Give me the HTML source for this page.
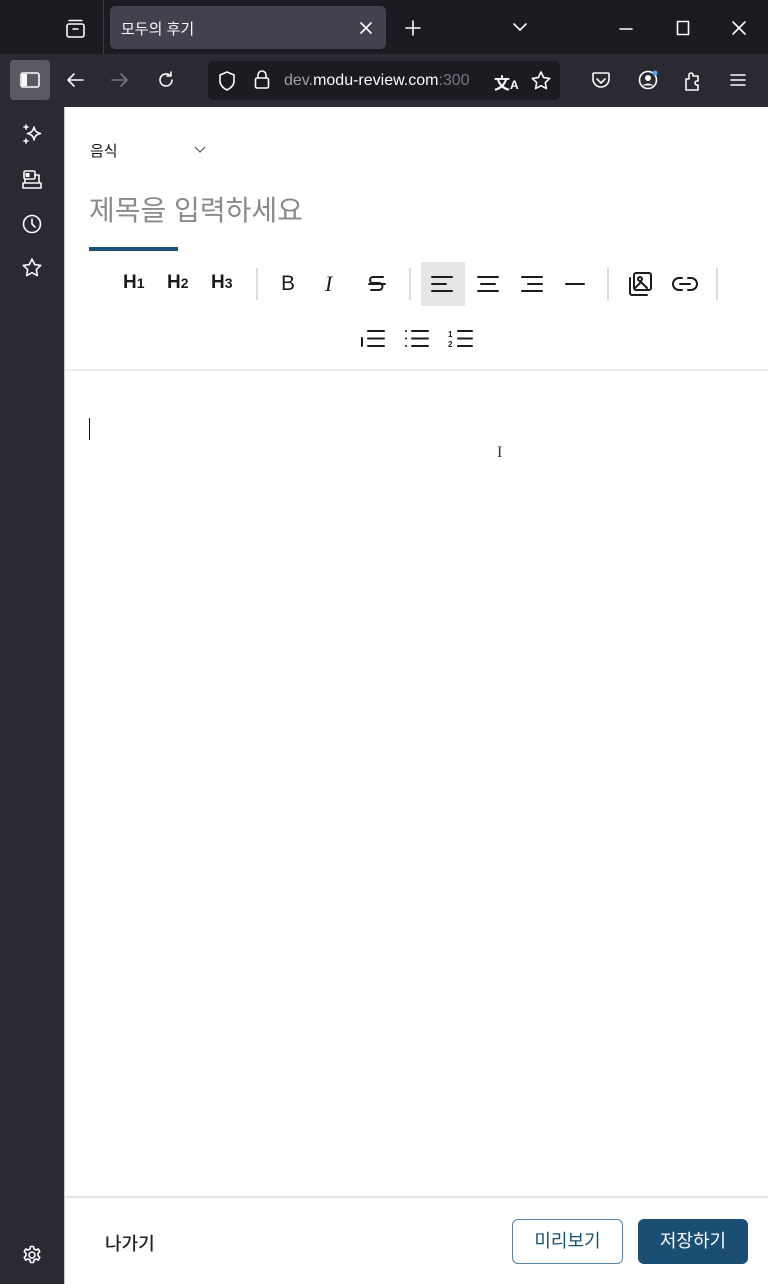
<!DOCTYPE html>
<html><head><meta charset="utf-8"><style>
*{margin:0;padding:0;box-sizing:border-box}
body{width:768px;height:1284px;overflow:hidden;position:relative;background:#fff;font-family:"Liberation Sans","Noto Sans CJK KR",sans-serif}
.a{position:absolute}
svg{position:absolute;overflow:visible}
.w{stroke:#fbfbfe;fill:none;stroke-width:1.6;stroke-linecap:round;stroke-linejoin:round}
.k{stroke:#1c1c1c;fill:none;stroke-width:2;stroke-linecap:round;stroke-linejoin:round}
.tb{font-weight:bold;font-size:19px;color:#1c1c1c;top:272px}
.sep{position:absolute;width:2px;height:32px;background:#ddd;top:268px}
</style></head><body>
<div class="a" style="left:0;top:0;width:768px;height:54px;background:#1c1b22"></div>
<div class="a" style="left:103px;top:0;width:1px;height:54px;background:#3a3944"></div>
<svg style="left:66px;top:19px" width="20" height="20"><rect x="1" y="5" width="17" height="13" rx="2" class="w"/><path d="M3 1.5h13M7 10h5" class="w"/></svg>
<div class="a" style="left:110px;top:6px;width:276px;height:43px;background:#42414d;border-radius:5px"></div>
<div class="a" style="left:121px;top:18px;font-size:15px;color:#fbfbfe">모두의 후기</div>
<svg style="left:360px;top:22px" width="12" height="12"><path d="M1 1l10 10M11 1L1 11" class="w"/></svg>
<svg style="left:405px;top:20px" width="16" height="16"><path d="M8 1v14M1 8h14" class="w"/></svg>
<svg style="left:513px;top:23px" width="14" height="8"><path d="M1 1l6 6 6-6" class="w"/></svg>
<svg style="left:620px;top:28px" width="12" height="2"><path d="M0 1h12" class="w" stroke-width="1"/></svg>
<svg style="left:677px;top:21px" width="12" height="14"><rect x="0.5" y="0.5" width="11" height="13" class="w" stroke-width="1"/></svg>
<svg style="left:732px;top:21px" width="14" height="14"><path d="M1 1l12 12M13 1L1 13" class="w" stroke-width="1.2"/></svg>

<div class="a" style="left:0;top:54px;width:768px;height:53px;background:#2b2a33"></div>
<div class="a" style="left:10px;top:60px;width:40px;height:40px;background:#5b5b66;border-radius:4px"></div>
<svg style="left:20px;top:72px" width="20" height="16"><rect x="1" y="1" width="18" height="14" rx="2" class="w"/><rect x="2" y="2" width="5" height="12" fill="#fbfbfe"/></svg>
<svg style="left:66px;top:72px" width="18" height="16"><path d="M17 8H2M8 2L2 8l6 6" class="w"/></svg>
<svg style="left:111px;top:72px" width="18" height="16"><path d="M1 8h15M10 2l6 6-6 6" class="w" style="stroke:#77767f"/></svg>
<svg style="left:157px;top:71px" width="18" height="18"><path d="M15 9a6 6 0 1 1-2-4.5M14 1v4h-4" class="w"/></svg>
<div class="a" style="left:208px;top:61px;width:352px;height:39px;background:#1c1b22;border-radius:5px"></div>
<svg style="left:218px;top:71px" width="18" height="20"><path d="M9 1l7 3v6c0 4-3 7-7 9-4-2-7-5-7-9V4z" class="w"/></svg>
<svg style="left:254px;top:70px" width="16" height="20"><rect x="1.5" y="8" width="13" height="10" rx="1.5" class="w"/><path d="M4 8V5a4 4 0 0 1 8 0v3" class="w"/></svg>
<div class="a" style="left:284px;top:72px;font-size:16px;color:#fbfbfe;white-space:nowrap;width:198px;overflow:hidden"><span style="color:#9e9ea6">dev.</span>modu-review.com<span style="color:#77767f">:300</span></div>
<div class="a" style="left:494px;top:70px;font-size:16px;color:#fbfbfe;font-weight:bold">文<span style="font-size:12px">A</span></div>
<svg style="left:531px;top:71px" width="20" height="19"><path d="M10 1l2.7 5.6 6 .8-4.4 4.2 1.1 6L10 14.7 4.6 17.6l1.1-6L1.3 7.4l6-.8z" class="w"/></svg>
<svg style="left:592px;top:72px" width="18" height="17"><path d="M2 1h14a1 1 0 0 1 1 1v5a8 8 0 0 1-16 0V2a1 1 0 0 1 1-1zM5 7l4 4 4-4" class="w"/></svg>
<svg style="left:638px;top:70px" width="20" height="20"><circle cx="10" cy="10" r="8.5" class="w"/><circle cx="10" cy="8" r="3" fill="#fbfbfe"/><path d="M4.5 15.5a7 5 0 0 1 11 0" fill="#fbfbfe"/><circle cx="17" cy="3" r="2.5" style="fill:#4fa8ff"/></svg>
<svg style="left:683px;top:70px" width="20" height="21"><path d="M3 9h3V5a2 2 0 0 1 4 0v1h5v5h-1a2 2 0 0 0 0 4h1v5H3z" class="w"/></svg>
<svg style="left:730px;top:74px" width="16" height="12"><path d="M1 1h14M1 6h14M1 11h14" class="w"/></svg>

<div class="a" style="left:0;top:107px;width:64px;height:1177px;background:#2b2a33"></div>
<svg style="left:22px;top:124px" width="22" height="22"><path d="M12 3c.8 4 2.5 5.7 6.5 6.5-4 .8-5.7 2.5-6.5 6.5-.8-4-2.5-5.7-6.5-6.5 4-.8 5.7-2.5 6.5-6.5z" class="w"/><path d="M4 1v4M2 3h4M4 15v4M2 17h4" class="w" stroke-width="1.3"/></svg>
<svg style="left:22px;top:169px" width="22" height="22"><rect x="2" y="2" width="11" height="8" rx="1.5" class="w"/><rect x="3.5" y="4" width="4" height="4" fill="#fbfbfe"/><path d="M13 6h4v8M3 10v4M1 14h18v5H1z" class="w"/></svg>
<svg style="left:22px;top:214px" width="20" height="20"><circle cx="10" cy="10" r="8.5" class="w"/><path d="M10 5v5l3 3" class="w"/></svg>
<svg style="left:22px;top:258px" width="20" height="20"><path d="M10 1l2.7 5.6 6 .8-4.4 4.2 1.1 6L10 14.7 4.6 17.6l1.1-6L1.3 7.4l6-.8z" class="w"/></svg>
<svg style="left:22px;top:1245px" width="20" height="20"><circle cx="10" cy="10" r="3" class="w"/><path d="M8.5 1.5h3l.5 2.5 2 1 2.3-1 1.5 2.6-1.8 1.7v2.4l1.8 1.7-1.5 2.6-2.3-1-2 1-.5 2.5h-3l-.5-2.5-2-1-2.3 1-1.5-2.6 1.8-1.7V8.3L2.2 6.6l1.5-2.6 2.3 1 2-1z" class="w" stroke-width="1.4"/></svg>

<div class="a" style="left:64px;top:107px;width:1px;height:1177px;background:#ccc"></div>
<div class="a" style="left:90px;top:140px;font-size:15px;color:#111">음식</div>
<svg style="left:194px;top:146px" width="12" height="7"><path d="M1 1l5 5 5-5" stroke="#555" fill="none" stroke-width="1.2"/></svg>
<div class="a" style="left:89px;top:189px;font-size:28px;color:#8a8a8a">제목을 입력하세요</div>
<div class="a" style="left:89px;top:247px;width:89px;height:4px;background:#1b4f73"></div>

<div class="a tb" style="left:123px">H<span style="font-size:14px">1</span></div>
<div class="a tb" style="left:167px">H<span style="font-size:14px">2</span></div>
<div class="a tb" style="left:211px">H<span style="font-size:14px">3</span></div>
<div class="sep" style="left:256px"></div>
<div class="a" style="left:281px;top:272px;font-size:21px;color:#1c1c1c">B</div>
<div class="a" style="left:325px;top:271px;font-size:22px;color:#1c1c1c;font-family:'Liberation Serif',serif;font-style:italic">I</div>
<svg style="left:368px;top:274px" width="18" height="20"><path d="M15 3H5a3 3 0 0 0 0 6h6a3.5 3.5 0 0 1 0 7H3M1 10h16" class="k" stroke-width="1.7"/></svg>
<div class="sep" style="left:409px"></div>
<div class="a" style="left:421px;top:262px;width:44px;height:44px;background:#e6e6e9"></div>
<svg style="left:431px;top:276px" width="24" height="16"><path d="M1 1h20M1 8h14M1 15h20" class="k"/></svg>
<svg style="left:476px;top:276px" width="24" height="16"><path d="M2 1h20M5 8h14M2 15h20" class="k"/></svg>
<svg style="left:520px;top:276px" width="24" height="16"><path d="M2 1h20M8 8h14M2 15h20" class="k"/></svg>
<svg style="left:565px;top:283px" width="20" height="2"><path d="M1 1h18" class="k" stroke-width="2.2"/></svg>
<div class="sep" style="left:607px"></div>
<svg style="left:628px;top:271px" width="26" height="26"><rect x="6" y="2" width="17" height="17" rx="2" class="k"/><path d="M2 7v15a2 2 0 0 0 2 2h15M7 17l6-6 6 6" class="k"/><circle cx="12" cy="8" r="2" class="k"/></svg>
<svg style="left:672px;top:276px" width="26" height="16"><path d="M10 2H7a6 6 0 0 0 0 12h3M16 2h3a6 6 0 0 1 0 12h-3M8 8h10" class="k"/></svg>
<div class="sep" style="left:716px"></div>
<svg style="left:360px;top:329px" width="26" height="20"><path d="M8 2h16M8 9.5h16M8 17h16M2 9v8" class="k"/></svg>
<svg style="left:404px;top:329px" width="26" height="20"><path d="M8 2h16M8 9.5h16M8 17h16" class="k"/><path d="M2 2h.1M2 9.5h.1M2 17h.1" class="k" stroke-width="2.6"/></svg>
<svg style="left:448px;top:329px" width="26" height="20"><path d="M10 2h14M10 9.5h14M10 17h14" class="k"/><text x="0" y="8" font-size="8" font-weight="bold" fill="#1c1c1c">1</text><text x="0" y="18" font-size="8" font-weight="bold" fill="#1c1c1c">2</text></svg>
<div class="a" style="left:65px;top:369px;width:703px;height:2px;background:#eee"></div>
<div class="a" style="left:89px;top:418px;width:1px;height:22px;background:#111"></div>
<div class="a" style="left:497px;top:444px;font-size:16px;color:#333;font-family:'Liberation Serif',serif">I</div>

<div class="a" style="left:65px;top:1196px;width:703px;height:2px;background:#e4e4e4"></div>
<div class="a" style="left:105px;top:1230px;font-size:18px;color:#222;font-weight:500">나가기</div>
<div class="a" style="left:512px;top:1219px;width:111px;height:45px;border:1.5px solid #5584ad;border-radius:6px;font-size:18px;color:#1b4f73;text-align:center;line-height:42px">미리보기</div>
<div class="a" style="left:638px;top:1219px;width:110px;height:45px;background:#1a4e72;border-radius:6px;font-size:18px;color:#fff;text-align:center;line-height:45px">저장하기</div>
</body></html>
